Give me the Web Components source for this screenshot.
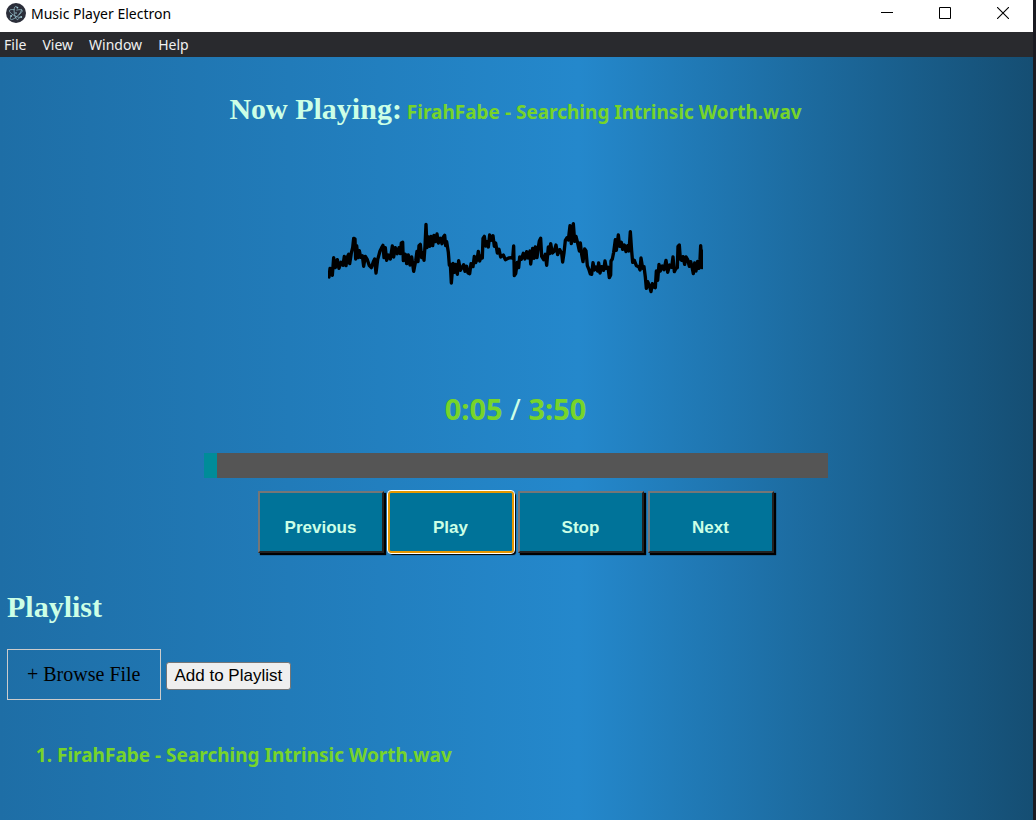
<!DOCTYPE html>
<html lang="en">
<head>
<meta charset="utf-8">
<meta name="viewport" content="width=device-width, initial-scale=1">
<title>Music Player Electron</title>
<style>
  html, body { margin: 0; min-height: 100%; }
  body {
    min-height: 100vh;
    display: flex;
    background: #1b1b22;
    font-family: "Noto Sans", sans-serif;
    --mint: #ccffe6;
    --lime: #77d42a;
  }
</style>
</head>
<body>
<app-window>
  <title-bar slot="title">Music Player Electron</title-bar>
  <menu-bar slot="menu"></menu-bar>
  <now-playing>FirahFabe - Searching Intrinsic Worth.wav</now-playing>
  <wave-form></wave-form>
  <track-progress elapsed="5" duration="230"></track-progress>
  <player-controls></player-controls>
  <play-list><span>FirahFabe - Searching Intrinsic Worth.wav</span></play-list>
</app-window>

<script>
function define(name, html, setup) {
  const template = document.createElement('template');
  template.innerHTML = html;
  customElements.define(name, class extends HTMLElement {
    constructor() {
      super();
      this.attachShadow({ mode: 'open' }).append(template.content.cloneNode(true));
    }
    connectedCallback() { if (setup) setup(this, this.shadowRoot); }
  });
}

define('app-window', `
  <style>
    :host { display: flex; flex-direction: column; flex: 1; min-width: 0; margin-right: 3px;
      background: linear-gradient(to right, #1e6ea6, #2488cc 56%, #154e73); }
    main { padding: 0 9px 0 7px; flex: 1; }
  </style>
  <slot name="title"></slot>
  <slot name="menu"></slot>
  <main><slot></slot></main>`);

define('title-bar', `
  <style>
    :host { display: flex; align-items: center; height: 32px; padding-right: 1px; background: #fff; color: #000; }
    .logo { width: 20px; height: 20px; margin: 0 5px 6px 6px; }
    .name { flex: 1; font: 14px/20px "Noto Sans", sans-serif; margin-bottom: 5px; }
    button { width: 58px; height: 32px; border: 0; padding: 0 0 6px; background: none; display: grid; place-items: center; }
    button svg { width: 12px; height: 12px; display: block; }
  </style>
  <svg class="logo" viewBox="0 0 20 20" aria-hidden="true">
    <circle cx="10" cy="10" r="10" fill="#2b2e3a"/>
    <g fill="none" stroke="#9fcbd6" stroke-width=".7" stroke-linecap="round">
      <path d="M8.2 6.7C5.8 6.3 3.9 6.6 3.5 7.4c-.6 1.1 1.4 3.2 4.6 5 3.1 1.8 6.1 2.5 7 1.6"/>
      <path d="M6.2 11.9c-1.6 1.8-2.3 3.6-1.7 4.3.8 1 3.6-.2 6.4-2.6 2.7-2.5 4.8-5.4 4.6-6.9"/>
      <path d="M12.9 11.8c1.4-1.2 3.9-3.2 3.3-4.5-.5-.9-2.8-.9-5.5-.2"/>
      <path d="M11.4 4.8C10.9 3.8 10.2 3.2 9.6 3.4c-1.3.3-1.8 3.3-1.3 6.7.5 3.6 1.9 6.6 3.3 6.5.7-.1 1.2-.8 1.5-1.8"/>
    </g>
    <g fill="#9fcbd6"><circle cx="10" cy="10" r=".8"/><circle cx="5" cy="13" r=".9"/><circle cx="15.2" cy="14" r=".9"/><circle cx="11.4" cy="4.6" r=".9"/></g>
  </svg>
  <span class="name"><slot></slot></span>
  <button aria-label="Minimize"><svg viewBox="0 0 12 12"><path d="M0 5.5h12" stroke="#000"/></svg></button>
  <button aria-label="Maximize"><svg viewBox="0 0 12 12"><path d="M.5.5h11v11H.5z" fill="none" stroke="#000"/></svg></button>
  <button aria-label="Close"><svg viewBox="0 0 12 12"><path d="M0 0l12 12M12 0L0 12" stroke="#000" stroke-width="1.1"/></svg></button>`);

define('menu-bar', `
  <style>
    :host { display: block; background: #292a2e; }
    nav { display: flex; gap: 16px; padding: 0 4px; height: 25px; align-items: center; }
    button { border: 0; padding: 1px 0 0; background: none; color: #f0f0f0; font: 14px/20px "Noto Sans", sans-serif; }
  </style>
  <nav><button>File</button><button>View</button><button>Window</button><button>Help</button></nav>`);

define('now-playing', `
  <style>
    :host { display: block; text-align: center; padding-top: 34px; }
    h2 { margin: 0; font: bold 30px/36px "Liberation Serif", serif; color: var(--mint); }
    span { font: bold 19px/24px "Noto Sans", sans-serif; color: var(--lime); }
  </style>
  <h2>Now Playing:<span> <slot></slot></span></h2>`);

define('wave-form', `
  <style>
    :host { display: block; padding: 88px 0 91px; }
    svg { display: block; margin: 0 auto; width: 375px; max-width: 100%; }
  </style>
  <svg viewBox="24 0 1125 255" role="img" aria-label="Audio waveform">
    <path fill="none" stroke="#000" stroke-width="10" stroke-linejoin="round" d="M20 178L27 186 30 160 34 174 37 181 41 128 46 158 52 134 57 160 63 142 69 151 73 124 78 152 82 126 86 118 89 146 94 114 98 98 101 70 105 72 107 132 110 92 114 128 118 107 122 127 127 122 131 154 136 124 142 134 148 152 154 158 160 140 164 132 168 174 173 134 180 108 185 98 189 91 192 128 196 98 200 136 205 120 211 132 217 93 221 126 226 98 232 116 237 98 241 116 244 84 248 82 250 137 256 118 260 146 265 120 270 150 275 126 281 169 287 138 291 109 294 140 297 92 301 88 305 128 309 114 312 136 315 94 318 28 321 98 325 66 329 94 333 64 338 92 342 61 346 80 351 57 355 84 361 70 366 86 370 66 374 61 377 92 380 80 385 112 388 150 391 148 394 204 399 145 403 172 407 148 412 178 416 137 421 166 427 156 431 149 435 169 440 154 444 174 449 176 453 146 459 155 463 124 467 143 471 134 475 109 479 138 484 122 487 129 489 70 493 64 497 93 501 80 505 96 509 60 513 76 519 62 523 94 527 84 532 114 537 103 542 126 550 120 556 134 566 129 574 128 578 130 581 93 583 182 587 176 592 142 596 158 599 126 604 133 610 115 615 132 620 110 625 129 630 108 632 147 638 100 642 130 646 96 651 128 655 96 658 78 662 70 665 124 671 134 676 118 680 151 685 96 689 116 692 86 697 114 703 108 708 90 713 119 719 104 725 115 728 141 732 114 736 76 741 68 745 75 750 32 754 86 760 26 764 79 768 64 772 80 778 108 781 84 785 118 789 140 794 102 798 108 802 152 807 164 811 177 815 178 819 143 823 165 828 156 833 168 836 144 840 174 845 155 851 166 855 138 859 160 864 157 868 188 872 180 873 138 877 132 881 112 886 74 889 106 895 60 899 94 904 82 908 103 913 90 918 110 923 92 927 108 931 50 935 108 938 142 943 136 949 152 956 155 960 165 963 129 968 160 972 155 976 186 979 220 983 200 988 212 993 230 997 206 1001 216 1006 218 1009 168 1013 196 1017 148 1021 168 1027 153 1032 164 1038 136 1043 172 1049 150 1055 157 1059 126 1063 170 1068 160 1072 158 1074 94 1078 90 1081 132 1085 136 1089 125 1094 148 1098 126 1103 134 1108 154 1112 140 1116 156 1120 176 1124 144 1128 168 1133 139 1137 160 1140 134 1142 92 1146 158 1153 104"/>
  </svg>`);

define('track-progress', `
  <style>
    :host { display: block; text-align: center; }
    p { margin: 0 0 26px; font: 29px/36px "Noto Sans", sans-serif; color: var(--mint); }
    b { color: var(--lime); }
    progress { appearance: none; display: block; width: 100%; max-width: 624px; height: 25px; margin: 0 auto; border: 0; background: #555; }
    progress::-webkit-progress-bar { background: #555; }
    progress::-webkit-progress-value { background: #008c99; }
  </style>
  <p><b class="elapsed"></b> / <b class="total"></b></p>
  <progress aria-label="Track position"></progress>`,
  (host, root) => {
    const clock = s => Math.floor(s / 60) + ':' + String(s % 60).padStart(2, '0');
    const elapsed = Number(host.getAttribute('elapsed'));
    const duration = Number(host.getAttribute('duration'));
    root.querySelector('.elapsed').textContent = clock(elapsed);
    root.querySelector('.total').textContent = clock(duration);
    const bar = root.querySelector('progress');
    bar.max = duration;
    bar.value = elapsed;
  });

define('player-controls', `
  <style>
    :host { display: flex; flex-wrap: wrap; justify-content: center; gap: 4px; padding-top: 13px; }
    button { width: 126px; height: 62px; padding: 12px 0 0; border: 2px solid; border-color: #767676 #222 #222 #767676;
      background: #007399; color: var(--mint); font: bold 17px/20px "Liberation Sans", sans-serif; box-shadow: 2px 2px 1px #000; }
    .current { border-color: #e59700; border-radius: 3px; outline: 1px solid #fff; }
  </style>
  <button>Previous</button>
  <button class="current">Play</button>
  <button>Stop</button>
  <button>Next</button>`);

define('play-list', `
  <style>
    :host { display: block; padding: 36px 0 48px; }
    h2 { margin: 0 0 24px; font: bold 30px/36px "Liberation Serif", serif; color: var(--mint); }
    form { display: flex; flex-wrap: wrap; align-items: baseline; gap: 5px; }
    label { border: 1px solid #ccc; padding: 13px 19px; font: 20px/23px "Liberation Serif", serif; color: #000; }
    input { display: none; }
    button { border: 1px solid #767676; border-radius: 3px; background: #efefef; color: #000; padding: 3px 8px; font: 17px/20px "Liberation Sans", sans-serif; }
    ol { margin: 40px 0 0; padding-left: 50px; font: bold 19px/30px "Noto Sans", sans-serif; color: var(--lime); }
  </style>
  <h2>Playlist</h2>
  <form>
    <label for="file">+ Browse File</label><input id="file" type="file">
    <button type="button">Add to Playlist</button>
  </form>
  <ol><li><slot></slot></li></ol>`);
</script>
</body>
</html>
